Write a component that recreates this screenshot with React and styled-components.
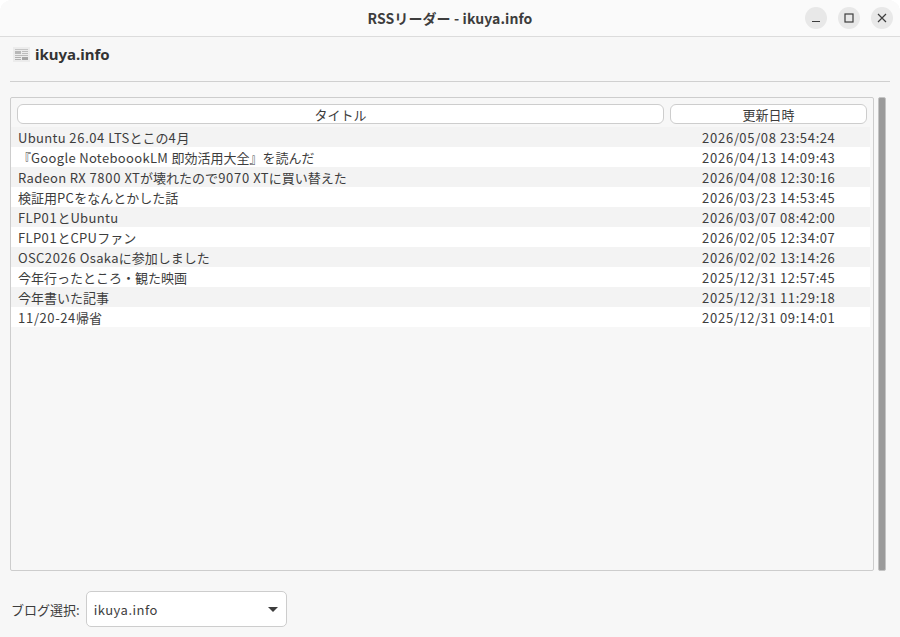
import styled, { createGlobalStyle } from "styled-components";

const posts = [
  ["Ubuntu 26.04 LTSとこの4月", "2026/05/08 23:54:24"],
  ["『Google NoteboookLM 即効活用大全』を読んだ", "2026/04/13 14:09:43"],
  ["Radeon RX 7800 XTが壊れたので9070 XTに買い替えた", "2026/04/08 12:30:16"],
  ["検証用PCをなんとかした話", "2026/03/23 14:53:45"],
  ["FLP01とUbuntu", "2026/03/07 08:42:00"],
  ["FLP01とCPUファン", "2026/02/05 12:34:07"],
  ["OSC2026 Osakaに参加しました", "2026/02/02 13:14:26"],
  ["今年行ったところ・観た映画", "2025/12/31 12:57:45"],
  ["今年書いた記事", "2025/12/31 11:29:18"],
  ["11/20-24帰省", "2025/12/31 09:14:01"],
];

// digits and latin letters run wider than the japanese text around them
const Mixed = ({ text }) =>
  text.split(/([0-9]+|[\x20-\x7e]+?(?=[0-9]|[^\x20-\x7e]|$))/).map((part, index) => {
    if (index % 2 === 0) return part;
    return /[0-9]/.test(part) ? (
      <Digits key={index}>{part}</Digits>
    ) : (
      <Latin key={index}>{part}</Latin>
    );
  });

const App = () => {
  return (
    <Window>
      <GlobalStyle />
      <TitleBar>
        <WindowTitle>RSSリーダー - ikuya.info</WindowTitle>
        <WindowButtons>
          <WindowButton aria-label="minimize">
            <svg width="10" height="10" viewBox="0 0 10 10">
              <path d="M1 8.5h8" stroke="#3d3d3d" strokeWidth="1.2" fill="none" />
            </svg>
          </WindowButton>
          <WindowButton aria-label="maximize">
            <svg width="10" height="10" viewBox="0 0 10 10">
              <rect x="1" y="1" width="8" height="8" stroke="#3d3d3d" strokeWidth="1.2" fill="none" />
            </svg>
          </WindowButton>
          <WindowButton aria-label="close">
            <svg width="10" height="10" viewBox="0 0 10 10">
              <path d="M1 1l8 8M9 1l-8 8" stroke="#3d3d3d" strokeWidth="1.2" fill="none" />
            </svg>
          </WindowButton>
        </WindowButtons>
      </TitleBar>
      <Body>
        <Heading>
          <svg width="17" height="15" viewBox="0 0 17 15">
            <rect x="0" y="0" width="17" height="15" fill="#ececec" />
            <path d="M2 2.5h13" stroke="#c4c4c4" fill="none" />
            <rect x="2" y="4" width="6" height="3" fill="#b8b8b8" />
            <path d="M9 4.5h6M9 6.5h6M2 8.5h13" stroke="#bcbcbc" fill="none" />
            <rect x="9" y="10" width="6" height="3" fill="#a4a4a4" />
            <path d="M2 10.5h6M2 12.5h6" stroke="#b0b0b0" fill="none" />
          </svg>
          <HeadingText>ikuya.info</HeadingText>
        </Heading>
        <Separator />
        <ListArea>
          <ListPanel>
            <HeaderRow>
              <HeaderButton $grow>タイトル</HeaderButton>
              <HeaderButton>更新日時</HeaderButton>
            </HeaderRow>
            <Rows>
              {posts.map(([title, date], index) => (
                <Row key={date} $odd={index % 2 === 0}>
                  <RowTitle>
                    <Mixed text={title} />
                  </RowTitle>
                  <RowDate>
                    <Mixed text={date} />
                  </RowDate>
                </Row>
              ))}
            </Rows>
          </ListPanel>
          <ScrollTrack>
            <ScrollThumb />
          </ScrollTrack>
        </ListArea>
        <Footer>
          <FooterLabel>ブログ選択:</FooterLabel>
          <Combo>
            <ComboText>ikuya.info</ComboText>
            <ComboArrow />
          </Combo>
        </Footer>
      </Body>
    </Window>
  );
};

export default App;

const GlobalStyle = createGlobalStyle`
  html, body {
    margin: 0;
    padding: 0;
    background: #fff;
  }
  body {
    font-family: "Noto Sans CJK JP", "Noto Sans", sans-serif;
    font-size: 13px;
    color: #3d3d3d;
  }
`;

const Latin = styled.span`
  letter-spacing: 0.33px;
`;

const Digits = styled.span`
  letter-spacing: 0.75px;
`;

const Window = styled.div`
  width: 900px;
  height: 637px;
  background: #f7f7f7;
  border-radius: 12px 12px 0 0;
  overflow: hidden;
  display: flex;
  flex-direction: column;
`;

const TitleBar = styled.header`
  height: 36px;
  flex: none;
  position: relative;
  display: flex;
  align-items: center;
  justify-content: center;
  background: #fafafa;
  border-bottom: 1px solid #dcdcdc;
`;

const WindowTitle = styled.h1`
  margin: 0;
  font-size: 14px;
  font-weight: 700;
  letter-spacing: 0.1px;
  color: #3d3d3d;
`;

const WindowButtons = styled.div`
  position: absolute;
  top: 7px;
  right: 7px;
  display: flex;
  gap: 11px;
`;

const WindowButton = styled.button`
  width: 22px;
  height: 22px;
  padding: 0;
  border: 0;
  border-radius: 50%;
  background: #e8e8e8;
  display: flex;
  align-items: center;
  justify-content: center;
`;

const Body = styled.main`
  flex: 1;
  display: flex;
  flex-direction: column;
  padding: 0 10px;
  min-height: 0;
`;

const Heading = styled.div`
  height: 34px;
  flex: none;
  display: flex;
  align-items: center;
  gap: 5px;
  padding: 0 3px;
`;

const HeadingText = styled.span`
  font-family: "Noto Sans", sans-serif;
  font-size: 15px;
  font-weight: 700;
  color: #333;
`;

const Separator = styled.hr`
  margin: 10px 0 15px;
  border: 0;
  border-top: 1px solid #d0d0d0;
  flex: none;
`;

const ListArea = styled.div`
  height: 474px;
  flex: none;
  display: flex;
  gap: 4px;
  padding-right: 4px;
`;

const ListPanel = styled.section`
  flex: 1;
  border: 1px solid #cdcdcd;
  border-radius: 2px;
  padding-top: 6px;
`;

const HeaderRow = styled.div`
  display: flex;
  gap: 6px;
  padding: 0 6px;
`;

const HeaderButton = styled.div`
  height: 20px;
  box-sizing: border-box;
  ${({ $grow }) => ($grow ? "flex: 1;" : "width: 197px;")}
  background: #fff;
  border: 1px solid #cdcdcd;
  border-radius: 6px;
  display: flex;
  align-items: center;
  justify-content: center;
  font-size: 13px;
  line-height: 1;
`;

const Rows = styled.div`
  margin: 3px 3px 0 0;
`;

const Row = styled.div`
  height: 20px;
  display: flex;
  align-items: center;
  background: ${({ $odd }) => ($odd ? "#f3f3f3" : "#fff")};
  padding-left: 7px;
`;

const RowTitle = styled.span`
  flex: 1;
  white-space: nowrap;
`;

const RowDate = styled.span`
  width: 168px;
  white-space: nowrap;
`;

const ScrollTrack = styled.div`
  width: 8px;
  flex: none;
`;

const ScrollThumb = styled.div`
  height: 100%;
  background: #9b9b9b;
  border: 1px solid #c4c4c4;
  box-sizing: border-box;
  border-radius: 2px;
`;

const Footer = styled.div`
  display: flex;
  align-items: center;
  gap: 6px;
  margin-top: 20px;
  padding-left: 1px;
`;

const FooterLabel = styled.label`
  font-size: 13px;
`;

const Combo = styled.div`
  width: 201px;
  height: 36px;
  box-sizing: border-box;
  background: #fff;
  border: 1px solid #cdcdcd;
  border-radius: 5px;
  display: flex;
  align-items: center;
  justify-content: space-between;
  padding: 0 8px 0 7px;
`;

const ComboText = styled.span`
  letter-spacing: 0.5px;
`;

const ComboArrow = styled.i`
  width: 0;
  height: 0;
  border-left: 5px solid transparent;
  border-right: 5px solid transparent;
  border-top: 5px solid #3d3d3d;
`;
